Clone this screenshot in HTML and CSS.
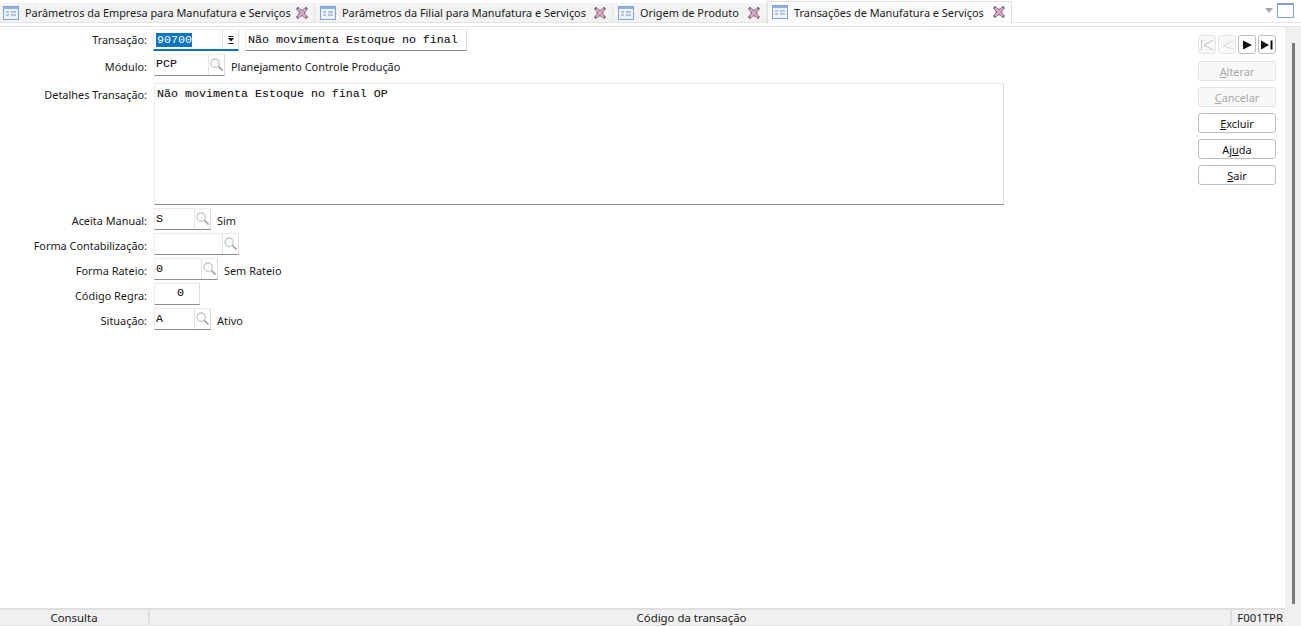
FILE: index.html
```html
<!DOCTYPE html>
<html lang="pt">
<head>
<meta charset="utf-8">
<title>Transações de Manufatura e Serviços</title>
<link rel="stylesheet" href="styles.css">
</head>
<body>
<svg class="defs" width="0" height="0" aria-hidden="true">
  <symbol id="doc" viewBox="0 0 16 14">
    <rect x=".5" y=".5" width="15" height="13" fill="#eef3fb" stroke="#7fa3d8"/>
    <rect x="1" y="1" width="14" height="2" fill="#8fb2e6"/>
    <path d="M3 6h3M3 9h3M8 6h5M8 9h5" stroke="#9db4d4" stroke-width="1.4" fill="none"/>
  </symbol>
  <symbol id="close" viewBox="0 0 12 12">
    <path d="M2 2l4 2.600L10 2M2 10l4-2.600 4 2.600M2 2l2.600 4L2 10M10 2L7.400 6l2.600 4" stroke="#7d6a7d" stroke-width="2.800" fill="none" stroke-linecap="square"/>
    <path d="M2.200 2.200l7.600 7.600M9.800 2.200l-7.600 7.600" stroke="#d9a6c6" stroke-width="2.400" fill="none"/>
  </symbol>
  <symbol id="lens" viewBox="0 0 16 16">
    <circle cx="6.500" cy="6" r="4.500" fill="#f7f9fb" stroke="#bcc2c6" stroke-width="1.200"/>
    <path d="M10 9.500l4.500 4.500" stroke="#a6a6a6" stroke-width="1.800" fill="none"/>
  </symbol>
</svg>
<div class="tabbar">
  <div class="tab t1"><svg class="tab-ico"><use href="#doc"/></svg><span class="tab-label">Parâmetros da Empresa para Manufatura e Serviços</span><svg class="tab-x"><use href="#close"/></svg></div>
  <div class="tab t2"><svg class="tab-ico"><use href="#doc"/></svg><span class="tab-label">Parâmetros da Filial para Manufatura e Serviços</span><svg class="tab-x"><use href="#close"/></svg></div>
  <div class="tab t3"><svg class="tab-ico"><use href="#doc"/></svg><span class="tab-label">Origem de Produto</span><svg class="tab-x"><use href="#close"/></svg></div>
  <div class="tab active"><svg class="tab-ico"><use href="#doc"/></svg><span class="tab-label">Transações de Manufatura e Serviços</span><svg class="tab-x"><use href="#close"/></svg></div>
  <div class="win-ctl">
    <span class="tri"></span>
    <span class="maxbox"></span>
  </div>
</div>
<div class="main">
  <div class="left">
    <div class="workspace">
      <div class="form">
        <label class="lbl r-first">Transação:</label>
        <div class="ctl">
          <div class="field combo"><span class="sel">90700</span><span class="drop"><svg width="6" height="8" viewBox="0 0 6 8"><path d="M.5 0h5v1h-5zM0 2h6L3 5.500zM.5 7h5v1h-5z" fill="#111"/></svg></span></div>
          <div class="field desc">Não movimenta Estoque no final</div>
        </div>
        <label class="lbl">Módulo:</label>
        <div class="ctl">
          <div class="field w71"><span class="val val-up">PCP</span><span class="lookup"><svg class="lens"><use href="#lens"/></svg></span></div>
          <span class="note">Planejamento Controle Produção</span>
        </div>
        <label class="lbl r-det">Detalhes Transação:</label>
        <div class="field area">Não movimenta Estoque no final OP</div>
        <label class="lbl">Aceita Manual:</label>
        <div class="ctl">
          <div class="field w57"><span class="val">S</span><span class="lookup"><svg class="lens"><use href="#lens"/></svg></span></div>
          <span class="note">Sim</span>
        </div>
        <label class="lbl">Forma Contabilização:</label>
        <div class="ctl">
          <div class="field w85"><span class="val"></span><span class="lookup"><svg class="lens"><use href="#lens"/></svg></span></div>
        </div>
        <label class="lbl">Forma Rateio:</label>
        <div class="ctl">
          <div class="field w64"><span class="val">0</span><span class="lookup"><svg class="lens"><use href="#lens"/></svg></span></div>
          <span class="note">Sem Rateio</span>
        </div>
        <label class="lbl">Código Regra:</label>
        <div class="ctl">
          <div class="field w46 centered">0</div>
        </div>
        <label class="lbl">Situação:</label>
        <div class="ctl">
          <div class="field w57"><span class="val">A</span><span class="lookup"><svg class="lens"><use href="#lens"/></svg></span></div>
          <span class="note">Ativo</span>
        </div>
      </div>
      <div class="actions">
        <div class="nav">
          <button class="btn nav-btn" disabled><svg width="14" height="12" viewBox="0 0 14 12"><path d="M1.500 11V1.500H3M13 1L4 6l9 5" fill="none" stroke="#c4c4c4"/></svg></button>
          <button class="btn nav-btn" disabled><svg width="14" height="12" viewBox="0 0 14 12"><path d="M13 1.500L3 7l10 3" fill="none" stroke="#d8d8d8"/></svg></button>
          <button class="btn nav-btn"><svg width="14" height="12" viewBox="0 0 14 12"><path d="M3 1.500l9 4.500-9 4.500z" fill="#111"/></svg></button>
          <button class="btn nav-btn"><svg width="14" height="12" viewBox="0 0 14 12"><path d="M1 1.500l8 4.500-8 4.500zM10.500 1.500h2v9h-2z" fill="#111"/></svg></button>
        </div>
        <button class="btn wide" disabled><u>A</u>lterar</button>
        <button class="btn wide" disabled><u>C</u>ancelar</button>
        <button class="btn wide"><u>E</u>xcluir</button>
        <button class="btn wide">Aj<u>u</u>da</button>
        <button class="btn wide"><u>S</u>air</button>
      </div>
    </div>
    <div class="status">
      <span class="st st1">Consulta</span>
      <span class="st st2">Código da transação</span>
      <span class="st st3">F001TPR</span>
    </div>
  </div>
  <div class="scroll"><span class="thumb"></span></div>
</div>
</body>
</html>
```
FILE: styles.css
```css
* { box-sizing: border-box; }
html, body { margin: 0; padding: 0; }
body {
  width: 1301px; height: 626px; overflow: hidden; background: #fff;
  display: flex; flex-direction: column;
  font: 10.9px "Noto Sans", "Open Sans", sans-serif; color: #1a1a1a;
}
.defs { position: absolute; }

.tabbar {
  height: 27px; flex: none; display: flex; align-items: flex-start; padding-top: 3px;
  border-bottom: 1px solid #e0e0e0; background: #fff;
}
.tab {
  height: 20px; display: flex; align-items: center; background: #f3f3f3;
  border-right: 1px solid #e6e6e6; border-bottom: 1px solid #e2e2e2; padding-left: 5px;
}
.t1 { width: 315px; padding-left: 3px; }
.t2 { width: 298px; }
.t3 { width: 154px; }
.tab.active {
  width: 245px; height: 23px; margin-top: -2px; background: #fbfbfb;
  border: 1px solid #e2e2e2; border-bottom: 0; padding-bottom: 2px; padding-left: 4px;
}
.tab-ico { width: 16px; height: 14px; flex: none; }
.tab-label { margin-left: 6px; white-space: nowrap; flex: 1; }
.tab-x { width: 12px; height: 12px; flex: none; margin-right: 6px; }
.win-ctl {
  flex: 1; height: 20px; display: flex; justify-content: flex-end; align-items: flex-start;
  gap: 4px; padding-right: 7px; border-bottom: 1px solid #e6e6e6;
}
.tri { width: 0; height: 0; margin-top: 5px; border: 4.500px solid transparent; border-top: 5px solid #a8a8a8; border-bottom: 0; }
.maxbox { width: 17px; height: 15px; border: 1px solid #7fa3d8; border-top-width: 2px; background: #fff; }

.main { flex: 1; display: flex; min-height: 0; }
.left { flex: 1; display: flex; flex-direction: column; min-width: 0; }
.scroll { width: 16px; flex: none; background: #f0f0f0; padding: 16px 0 22px 7px; }
.thumb { display: block; width: 3px; height: 100%; background: #7a7a7a; }

.workspace { flex: 1; display: flex; justify-content: space-between; min-height: 0; padding-right: 9px; }
.form {
  display: grid; grid-template-columns: 147px 850px; column-gap: 7px; row-gap: 3px;
  grid-template-rows: 22px 22px 126px; grid-auto-rows: 22px;
  align-content: start; padding-top: 2px;
}
.lbl { text-align: right; line-height: 22px; white-space: nowrap; padding-top: 2px; }
.r-first { padding-top: 0; }
.r-det { line-height: 26px; padding-top: 3px; }
.ctl { display: flex; align-items: stretch; gap: 6px; min-width: 0; }
.field {
  display: flex; align-items: center; background: #fff;
  border: 1px solid #ececec; border-right-color: #dcdcdc; border-bottom: 1px solid #8f8f8f;
  font: 11.67px/14px "Liberation Mono", monospace; -webkit-text-stroke: .1px #222; color: #111;
  height: 22px;
}
.combo { width: 86px; margin-left: -1px; border-bottom: 2px solid #0a74c4; padding-left: 2px; justify-content: space-between; }
.sel { background: #0a74c4; color: #fff; -webkit-text-stroke: 0; padding: 0 1px; line-height: 14px; width: 36px; }
.drop { width: 16px; height: 100%; border-left: 1px solid #e2e2e2; display: flex; align-items: center; justify-content: center; }
.desc { width: 222px; padding-left: 2px; }
.val { flex: 1; padding: 3px 0 0 1px; line-height: 14px; align-self: flex-start; }
.val-up { padding-top: 2px; }
.lookup { width: 16px; height: 100%; flex: none; border-left: 1px solid #e2e2e2; display: flex; align-items: center; justify-content: flex-end; }
.lens { width: 16px; height: 16px; }
.w71 { width: 71px; }
.w57 { width: 57px; }
.w85 { width: 85px; }
.w64 { width: 64px; }
.w46 { width: 46px; }
.centered { justify-content: center; padding: 0 0 2px 7px; }
.note { line-height: 22px; white-space: nowrap; padding-top: 2px; }
.area { height: 122px; align-items: flex-start; padding: 3px 2px; margin-top: 4px; }

.actions { width: 78px; display: flex; flex-direction: column; gap: 6px; padding-top: 8px; flex: none; }
.nav { display: flex; justify-content: space-between; height: 20px; }
.btn {
  height: 20px; padding: 0; background: #fff; border: 1px solid #bdbdbd; border-radius: 3px;
  font: 10.9px "Noto Sans", sans-serif; color: #111; display: flex; align-items: center; justify-content: center;
}
.btn[disabled] { background: #f8f8f8; border-color: #e4e4e4; color: #a8a8a8; }
.nav-btn { width: 18px; height: 19px; }
.wide { width: 78px; }

.status {
  height: 18px; flex: none; display: flex; background: #f0f0f0;
  border-top: 2px solid #dedede; border-bottom: 1px solid #e4e4e4;
  font-size: 11.4px; line-height: 14px;
}
.st { text-align: center; white-space: nowrap; padding-top: 1px; }
.st1 { width: 150px; border-right: 2px solid #dcdcdc; }
.st2 { width: 1082px; border-right: 2px solid #dcdcdc; padding-left: 3px; }
.st3 { flex: 1; text-align: right; padding-right: 2px; }
```
